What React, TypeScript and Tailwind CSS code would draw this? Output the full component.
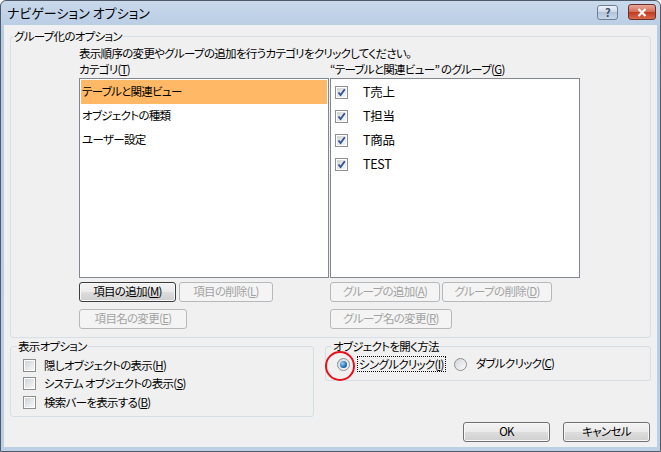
import React from "react";

function Key({ label, k }: { label: string; k?: string }) {
  if (!k) return <>{label}</>;
  return (
    <>
      {label}(<u>{k}</u>)
    </>
  );
}

function Check({ checked }: { checked?: boolean }) {
  return (
    <span className="flex h-[13px] w-[13px] shrink-0 items-center justify-center border border-[#8e8f8f] bg-white">
      <span className="relative flex h-[9px] w-[9px] items-center justify-center bg-[linear-gradient(135deg,#cfd3d8,#f7f7f7)]">
        {checked && (
          <svg viewBox="0 0 9 9" className="absolute h-[9px] w-[9px]">
            <path d="M1.5 4.5 L3.6 7 L7.8 1.2" fill="none" stroke="#2f4d92" strokeWidth="1.7" />
          </svg>
        )}
      </span>
    </span>
  );
}

function Radio({ checked }: { checked?: boolean }) {
  return (
    <span className="flex h-[13px] w-[13px] shrink-0 items-center justify-center rounded-full border border-[#8e8f8f] bg-[linear-gradient(135deg,#d4d6d9,#fbfbfb)]">
      {checked && (
        <span className="h-[7px] w-[7px] rounded-full bg-[radial-gradient(circle_at_35%_35%,#9ad2f7,#1f6fb6_60%,#0b3e7a)]" />
      )}
    </span>
  );
}

function Btn({
  children,
  w,
  disabled,
  focus,
}: {
  children: React.ReactNode;
  w: string;
  disabled?: boolean;
  focus?: boolean;
}) {
  return (
    <button
      className={
        "flex h-[20px] items-center justify-center rounded-[3px] border leading-none " +
        w +
        (disabled
          ? " border-[#b5b9bc] bg-[#f4f4f4] text-[#a2a2a2]"
          : focus
            ? " border-[#3c3c3c] bg-[linear-gradient(#f2f2f2_0%,#ebebeb_50%,#dddddd_50%,#cfcfcf_100%)] text-black shadow-[inset_0_0_0_1px_#f8f8f8]"
            : " border-[#707070] bg-[linear-gradient(#f2f2f2_0%,#ebebeb_50%,#dddddd_50%,#cfcfcf_100%)] text-black shadow-[inset_0_0_0_1px_#f8f8f8]")
      }
    >
      {children}
    </button>
  );
}

const categories = ["テーブルと関連ビュー", "オブジェクトの種類", "ユーザー設定"];
const groups = ["T売上", "T担当", "T商品", "TEST"];

export default function App() {
  return (
    <div className="flex h-[452px] w-[661px] flex-col overflow-hidden rounded-t-[6px] border border-[#4f5b69] bg-[linear-gradient(#c9d9ec,#b7cbe3_30px,#bccfe5)] font-['Noto_Sans_CJK_JP',sans-serif] text-[11.5px] tracking-[-0.7px] text-black [font-feature-settings:'palt']">
      {/* title bar */}
      <div className="flex h-[24px] shrink-0 items-center pl-[6px] pr-[4px]">
        <span className="flex-1 text-[13px] tracking-normal text-[#000]">ナビゲーション オプション</span>
        <div className="mt-[-2px] flex items-center gap-[10px]">
          <span className="flex h-[15px] w-[21px] items-center justify-center rounded-[3px] border border-[#6f7f93] bg-[linear-gradient(#eef3f9,#c9d6e6_50%,#b3c4da_50%,#c8d7ea)] text-[11px] font-bold leading-none text-[#3a4b63]">
            ?
          </span>
          <span className="flex h-[16px] w-[28px] items-center justify-center rounded-[3px] border border-[#6b3028] bg-[linear-gradient(#e9a99c,#d36b55_50%,#c0381f_50%,#d9694c)]">
            <svg viewBox="0 0 10 9" className="h-[9px] w-[10px]">
              <path d="M1.5 1 L8.5 8 M8.5 1 L1.5 8" stroke="#fff" strokeWidth="2.2" />
            </svg>
          </span>
        </div>
      </div>

      {/* client area */}
      <div className="mx-[3px] mb-[4px] flex flex-1 flex-col bg-[#f0f0f0]">
        <fieldset className="ml-[6px] mt-[4px] h-[309px] w-[641px] rounded-[3px] border border-[#d5dfe5] px-[2px]">
          <legend className="px-[1px] leading-[14px]">グループ化のオプション</legend>
          <div className="ml-[66px] flex flex-col">
            <div className="mt-[2px] leading-[16px]">
              表示順序の変更やグループの追加を行うカテゴリをクリックしてください。
            </div>
            <div className="flex leading-[16px]">
              <span className="w-[250px]">
                <Key label="カテゴリ" k="T" />
              </span>
              <span className="pl-[1px]">
                <Key label="“テーブルと関連ビュー”  のグループ" k="G" />
              </span>
            </div>
            <div className="mt-[1px] flex h-[200px]">
              <div className="w-[250px] border border-[#828790] bg-white p-[1px]">
                {categories.map((c, i) => (
                  <div
                    key={c}
                    className={
                      "flex h-[24px] items-center pl-[1px] " + (i === 0 ? "bg-[#ffb866]" : "")
                    }
                  >
                    {c}
                  </div>
                ))}
              </div>
              <div className="ml-[1px] w-[250px] border border-[#828790] bg-white pt-[1px]">
                {groups.map((g) => (
                  <div key={g} className="flex h-[24px] items-center pl-[4px]">
                    <Check checked />
                    <span className="ml-[15px] text-[12.5px] tracking-[-0.3px]">{g}</span>
                  </div>
                ))}
              </div>
            </div>
            <div className="mt-[4px] flex">
              <div className="flex w-[251px] flex-col gap-[7px]">
                <div className="flex gap-[3px]">
                  <Btn w="w-[97px]" focus>
                    <Key label="項目の追加" k="M" />
                  </Btn>
                  <Btn w="w-[94px]" disabled>
                    <Key label="項目の削除" k="L" />
                  </Btn>
                </div>
                <Btn w="w-[108px]" disabled>
                  <Key label="項目名の変更" k="E" />
                </Btn>
              </div>
              <div className="flex flex-col gap-[7px]">
                <div className="flex gap-[2px]">
                  <Btn w="w-[110px]" disabled>
                    <Key label="グループの追加" k="A" />
                  </Btn>
                  <Btn w="w-[110px]" disabled>
                    <Key label="グループの削除" k="D" />
                  </Btn>
                </div>
                <Btn w="w-[122px]" disabled>
                  <Key label="グループ名の変更" k="R" />
                </Btn>
              </div>
            </div>
          </div>
        </fieldset>

        <div className="mt-[1px] flex items-start">
          <fieldset className="ml-[6px] h-[78px] w-[304px] rounded-[3px] border border-[#d5dfe5] px-[6px]">
            <legend className="px-[1px] leading-[14px]">表示オプション</legend>
            <div className="ml-[6px] flex flex-col">
              {[
                ["隠しオブジェクトの表示", "H"],
                ["システム オブジェクトの表示", "S"],
                ["検索バーを表示する", "B"],
              ].map(([t, k], i) => (
                <div key={t} className={"flex h-[18.5px] items-center " + (i === 0 ? "mt-[3px]" : "")}>
                  <Check />
                  <span className="ml-[8px]">
                    <Key label={t} k={k} />
                  </span>
                </div>
              ))}
            </div>
          </fieldset>

          <fieldset className="ml-[11px] h-[42px] w-[326px] rounded-[3px] border border-[#d5dfe5] px-[6px]">
            <legend className="px-[1px] leading-[14px]">オブジェクトを開く方法</legend>
            <div className="mt-[3px] flex h-[16px] items-center pl-[5px]">
              <div className="relative flex items-center">
                <Radio checked />
                <span className="pointer-events-none absolute left-[-12px] top-[-7px] h-[30px] w-[30px] rounded-full border-2 border-[#e8101c]" />
              </div>
              <span className="ml-[7px] border border-dotted border-black px-[1px] leading-[14px]">
                <Key label="シングルクリック" k="I" />
              </span>
              <span className="ml-[8px]">
                <Radio />
              </span>
              <span className="ml-[9px]">
                <Key label="ダブルクリック" k="C" />
              </span>
            </div>
          </fieldset>
        </div>

        <div className="mt-[5px] flex justify-end gap-[13px] pr-[7px]">
          <Btn w="w-[87px]">OK</Btn>
          <Btn w="w-[87px]">キャンセル</Btn>
        </div>
      </div>
    </div>
  );
}
